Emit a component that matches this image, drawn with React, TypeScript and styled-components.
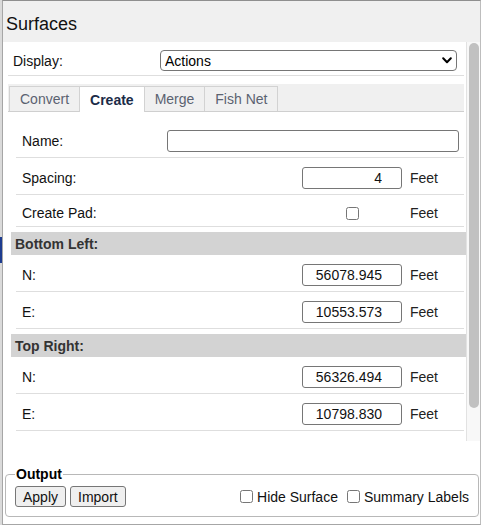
import React from 'react';
import styled, { createGlobalStyle } from 'styled-components';

const GlobalStyle = createGlobalStyle`
  html, body {
    margin: 0;
    padding: 0;
    background: #dadada;
  }
  body {
    font-family: "Liberation Sans", Arial, sans-serif;
    font-size: 14px;
    color: #111;
  }
`;

const Page = styled.div`
  position: relative;
  width: 481px;
  height: 525px;
`;

const BlueEdge = styled.div`
  position: absolute;
  left: 0;
  top: 237px;
  width: 2px;
  height: 26px;
  background: #1d3c8f;
`;

const Panel = styled.div`
  margin-left: 2px;
  width: 479px;
  height: 525px;
  box-sizing: border-box;
  display: flex;
  flex-direction: column;
  background: #fff;
  border-left: 1px solid #a6a6a6;
  border-top: 1px solid #8f8f8f;
  border-right: 1px solid #bdbdbd;
  border-bottom: 1px solid #a6a6a6;
`;

const TitleBar = styled.div`
  height: 41px;
  flex: none;
  display: flex;
  align-items: center;
  padding: 5px 0 0 3px;
  box-sizing: border-box;
  background: #f0f0f0;
  font-size: 18px;
  color: #111;
`;

const ScrollArea = styled.div`
  height: 399px;
  flex: none;
  display: flex;
`;

const Viewport = styled.div`
  flex: 1;
  overflow: hidden;
  padding: 0 2px 0 5px;
`;

const ScrollTrack = styled.div`
  width: 14px;
  flex: none;
  box-sizing: border-box;
  background: #f8f8f8;
  border-left: 1px solid #e2e2e2;
  padding: 1px 1px 0 2px;
`;

const ScrollThumb = styled.div<{ $size: number }>`
  height: ${(p) => p.$size}px;
  border-radius: 5px;
  background: #c1c1c1;
`;

const DisplayRow = styled.div`
  display: flex;
  align-items: center;
  padding: 8px 0 4px 5px;
  border-bottom: 1px solid #dedede;
`;

const DisplayLabel = styled.span`
  width: 147px;
`;

const SelectWrap = styled.div`
  position: relative;
  width: 297px;
`;

const Select = styled.select`
  appearance: none;
  width: 100%;
  height: 21px;
  box-sizing: border-box;
  border: 1px solid #767676;
  border-radius: 4px;
  background: #fff;
  padding: 0 0 0 4px;
  font-family: inherit;
  font-size: 14px;
  color: #000;
`;

const Chevron = styled.svg`
  position: absolute;
  right: 5px;
  top: 7px;
  pointer-events: none;
`;

const TabStrip = styled.div`
  margin-top: 8px;
  display: flex;
  padding: 2px 0 0 1px;
  background: #f0f0f0;
  border-bottom: 1px solid #cfcfcf;
`;

const Tab = styled.div<{ $active?: boolean }>`
  display: flex;
  align-items: center;
  padding: 0 10px;
  border: 1px solid #d2d2d2;
  border-bottom: none;
  margin-right: -1px;
  margin-bottom: ${(p) => (p.$active ? '-1px' : '0')};
  height: ${(p) => (p.$active ? '25px' : '24px')};
  background: ${(p) => (p.$active ? '#fff' : '#f0f0f0')};
  color: ${(p) => (p.$active ? '#1b2b48' : '#5b6270')};
  font-weight: ${(p) => (p.$active ? 'bold' : 'normal')};
  font-size: 14px;
`;

const TabBody = styled.div`
  padding-top: 9px;
`;

const Row = styled.div<{ $tight?: boolean }>`
  display: grid;
  grid-template-columns: 1fr 100px 54px;
  column-gap: 8px;
  align-items: center;
  margin-left: 8px;
  padding: ${(p) => (p.$tight ? '10px 0 5px 6px' : '9px 0 5px 6px')};
  border-bottom: 1px solid #dedede;
  line-height: 16px;
`;

const Label = styled.span`
  color: #111;
`;

const Unit = styled.span`
  color: #222;
`;

const NumberInput = styled.input`
  width: 100px;
  height: 22px;
  box-sizing: border-box;
  border: 1px solid #767676;
  border-radius: 3px;
  padding: 0 19px 0 4px;
  text-align: right;
  font-family: inherit;
  font-size: 14px;
  color: #111;
  background: #fff;
`;

const NameInput = styled.input`
  grid-column: 2 / span 2;
  justify-self: end;
  width: 292px;
  margin-right: 5px;
  height: 22px;
  box-sizing: border-box;
  border: 1px solid #767676;
  border-radius: 3px;
  font-family: inherit;
  font-size: 14px;
`;

const Check = styled.input`
  justify-self: center;
  width: 13px;
  height: 13px;
  margin: 0;
`;

const SectionHeader = styled.div`
  margin: 5px -2px 0 3px;
  height: 23px;
  display: flex;
  align-items: center;
  padding-left: 4px;
  background: #d3d3d3;
  font-weight: bold;
  color: #333;
`;

const Bottom = styled.div`
  padding: 25px 1px 0 2px;
`;

const Fieldset = styled.fieldset`
  margin: 0;
  padding: 3px 9px 9px;
  border: 1px solid #b8b8b8;
  border-radius: 4px;
  display: flex;
  align-items: center;
  justify-content: space-between;
`;

const Legend = styled.legend`
  padding: 0 1px;
  font-weight: bold;
  font-size: 14px;
  line-height: 17px;
  color: #000;
`;

const Buttons = styled.div`
  display: flex;
  gap: 4px;
`;

const Button = styled.button`
  height: 21px;
  padding: 0 7px;
  border: 1px solid #767676;
  border-radius: 3px;
  background: #efefef;
  font-family: inherit;
  font-size: 14px;
  color: #111;
`;

const Options = styled.div`
  display: flex;
  align-items: center;
  gap: 9px;
`;

const Option = styled.label`
  display: flex;
  align-items: center;
  gap: 4px;
  color: #111;
`;

const coords = [
  { title: 'Bottom Left:', n: '56078.945', e: '10553.573' },
  { title: 'Top Right:', n: '56326.494', e: '10798.830' },
];

const tabs = ['Convert', 'Create', 'Merge', 'Fish Net'];

const App = () => {
  return (
    <Page>
      <GlobalStyle />
      <BlueEdge />
      <Panel>
        <TitleBar>Surfaces</TitleBar>
        <ScrollArea>
          <Viewport>
            <DisplayRow>
              <DisplayLabel>Display:</DisplayLabel>
              <SelectWrap>
                <Select defaultValue="Actions">
                  <option>Actions</option>
                </Select>
                <Chevron width="10" height="7" viewBox="0 0 10 7">
                  <path d="M1.2 1.3 L5 5.2 L8.8 1.3" fill="none" stroke="#000" strokeWidth="2" strokeLinecap="round" strokeLinejoin="round" />
                </Chevron>
              </SelectWrap>
            </DisplayRow>

            <TabStrip>
              {tabs.map((t) => (
                <Tab key={t} $active={t === 'Create'}>{t}</Tab>
              ))}
            </TabStrip>

            <TabBody>
              <Row>
                <Label>Name:</Label>
                <NameInput type="text" />
              </Row>
              <Row>
                <Label>Spacing:</Label>
                <NumberInput defaultValue="4" />
                <Unit>Feet</Unit>
              </Row>
              <Row $tight>
                <Label>Create Pad:</Label>
                <Check type="checkbox" />
                <Unit>Feet</Unit>
              </Row>

              {coords.map((c) => (
                <React.Fragment key={c.title}>
                  <SectionHeader>{c.title}</SectionHeader>
                  <Row>
                    <Label>N:</Label>
                    <NumberInput defaultValue={c.n} />
                    <Unit>Feet</Unit>
                  </Row>
                  <Row>
                    <Label>E:</Label>
                    <NumberInput defaultValue={c.e} />
                    <Unit>Feet</Unit>
                  </Row>
                </React.Fragment>
              ))}
            </TabBody>
          </Viewport>
          <ScrollTrack>
            <ScrollThumb $size={365} />
          </ScrollTrack>
        </ScrollArea>

        <Bottom>
          <Fieldset>
            <Legend>Output</Legend>
            <Buttons>
              <Button>Apply</Button>
              <Button>Import</Button>
            </Buttons>
            <Options>
              <Option>
                <Check type="checkbox" />
                Hide Surface
              </Option>
              <Option>
                <Check type="checkbox" />
                Summary Labels
              </Option>
            </Options>
          </Fieldset>
        </Bottom>
      </Panel>
    </Page>
  );
};

export default App;
